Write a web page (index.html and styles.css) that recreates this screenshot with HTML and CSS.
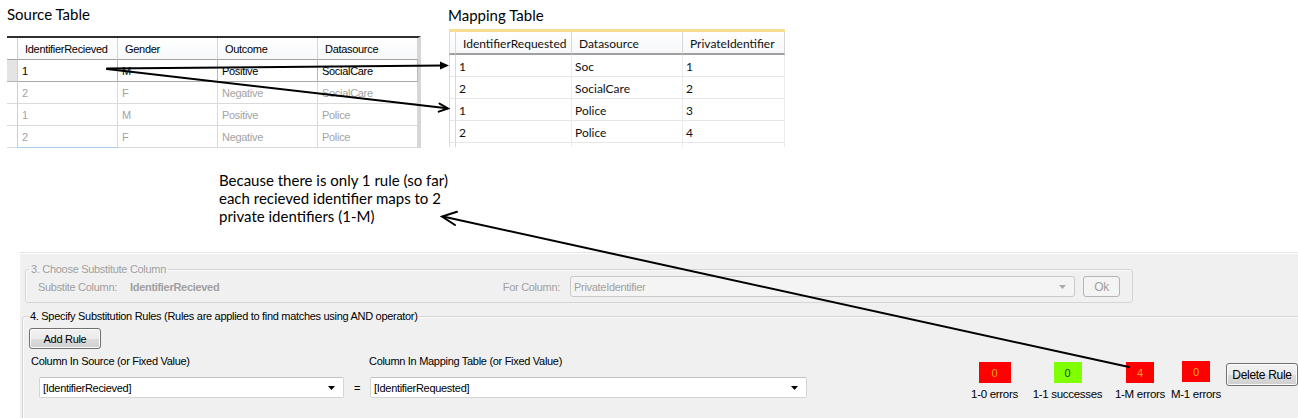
FILE: index.html
```html
<!DOCTYPE html>
<html>
<head>
<meta charset="utf-8">
<link rel="stylesheet" href="styles.css">
</head>
<body>
<div class="page">
  <div class="top">
    <section class="src">
      <h2 class="title">Source Table</h2>
      <div class="sgrid">
        <div class="c h rh"></div>
        <div class="c h">IdentifierRecieved</div>
        <div class="c h">Gender</div>
        <div class="c h">Outcome</div>
        <div class="c h">Datasource</div>

        <div class="c rh sel"></div>
        <div class="c r1">1</div>
        <div class="c r1">M</div>
        <div class="c r1">Positive</div>
        <div class="c r1">SocialCare</div>

        <div class="c rh"></div>
        <div class="c dim">2</div>
        <div class="c dim">F</div>
        <div class="c dim">Negative</div>
        <div class="c dim">SocialCare</div>

        <div class="c rh"></div>
        <div class="c dim">1</div>
        <div class="c dim">M</div>
        <div class="c dim">Positive</div>
        <div class="c dim">Police</div>

        <div class="c rh"></div>
        <div class="c dim last">2</div>
        <div class="c dim">F</div>
        <div class="c dim">Negative</div>
        <div class="c dim">Police</div>
      </div>
    </section>
    <section class="map">
      <h2 class="title">Mapping Table</h2>
      <div class="mgrid">
        <div class="m mh rh"></div>
        <div class="m mh">IdentifierRequested</div>
        <div class="m mh">Datasource</div>
        <div class="m mh">PrivateIdentifier</div>

        <div class="m rh"></div><div class="m">1</div><div class="m">Soc</div><div class="m">1</div>
        <div class="m rh"></div><div class="m">2</div><div class="m">SocialCare</div><div class="m">2</div>
        <div class="m rh"></div><div class="m">1</div><div class="m">Police</div><div class="m">3</div>
        <div class="m rh"></div><div class="m">2</div><div class="m">Police</div><div class="m">4</div>
        <div class="m rh stub"></div><div class="m stub"></div><div class="m stub"></div><div class="m stub"></div>
      </div>
    </section>
  </div>

  <p class="note">Because there is only 1 rule (so far)<br>each recieved identifier maps to 2<br>private identifiers (1-M)</p>

  <div class="panel">
    <fieldset class="grp grp3">
      <legend>3. Choose Substitute Column</legend>
      <div class="g3row">
        <span class="gray">Substite Column:</span>
        <span class="gray bold">IdentifierRecieved</span>
        <span class="gray forcol">For Column:</span>
        <div class="combo disabled wide3">
          <span>PrivateIdentifier</span>
          <svg class="dd" width="7" height="4" viewBox="0 0 7 4"><path d="M0 0H7L3.5 4Z" fill="#a9a9a9"/></svg>
        </div>
        <button class="btn btn-dis" type="button">Ok</button>
      </div>
    </fieldset>

    <fieldset class="grp grp4">
      <legend>4. Specify Substitution Rules (Rules are applied to find matches using AND operator)</legend>
      <div class="g4body">
        <div class="g4left">
          <button class="btn addrule" type="button">Add Rule</button>
          <div class="rules">
            <div class="field f1">
              <div class="flabel">Column In Source (or Fixed Value)</div>
              <div class="frow">
                <div class="combo c1">
                  <span>[IdentifierRecieved]</span>
                  <svg class="dd" width="7" height="4" viewBox="0 0 7 4"><path d="M0 0H7L3.5 4Z" fill="#000"/></svg>
                </div>
                <span class="eq">=</span>
              </div>
            </div>
            <div class="field f2">
              <div class="flabel">Column In Mapping Table (or Fixed Value)</div>
              <div class="frow">
                <div class="combo c2">
                  <span>[IdentifierRequested]</span>
                  <svg class="dd" width="7" height="4" viewBox="0 0 7 4"><path d="M0 0H7L3.5 4Z" fill="#000"/></svg>
                </div>
              </div>
            </div>
          </div>
        </div>
        <div class="stats">
          <div class="stat s1"><div class="badge red b32">0</div><div class="slabel">1-0 errors</div></div>
          <div class="stat s2"><div class="badge green">0</div><div class="slabel">1-1 successes</div></div>
          <div class="stat s3"><div class="badge red">4</div><div class="slabel">1-M errors</div></div>
          <div class="stat s4"><div class="badge red up">0</div><div class="slabel">M-1 errors</div></div>
          <button class="btn delrule" type="button">Delete Rule</button>
        </div>
      </div>
    </fieldset>
  </div>

  <svg class="arrows" width="1298" height="418" viewBox="0 0 1298 418">
    <g stroke="#000" stroke-width="2" fill="none" stroke-linecap="round">
      <line x1="107" y1="68.5" x2="443" y2="65.6"/>
      <line x1="107" y1="69" x2="447" y2="108.3"/>
      <polyline points="439.5,103.6 448,108.5 438.7,111.6"/>
      <line x1="1129" y1="367" x2="444" y2="216.8"/>
      <polyline points="457,211.8 442,216.5 455,225"/>
    </g>
    <polygon points="449,65.5 440,61.5 440,69.6" fill="#000"/>
  </svg>
</div>
</body>
</html>
```
FILE: styles.css
```css
html, body {
  margin: 0;
  padding: 0;
  background: #fff;
}
body {
  width: 1298px;
  height: 418px;
  overflow: hidden;
}
.page {
  position: relative;
  width: 1298px;
  height: 418px;
  font-family: "Liberation Sans", Arial, sans-serif;
  font-size: 11px;
  letter-spacing: -0.3px;
  color: #000;
}

/* top area */
.top {
  display: flex;
  height: 150px;
}
.title {
  margin: 0;
  font-family: Lato, "Open Sans", sans-serif;
  font-weight: normal;
  font-size: 15px;
  line-height: 20px;
  letter-spacing: 0;
  color: #000;
  box-sizing: border-box;
}
.src {
  margin-left: 7px;
}
.src .title {
  height: 36px;
  padding-top: 4px;
}
.map {
  margin-left: 28px;
}
.map .title {
  height: 29px;
  padding-top: 5px;
  margin-left: -1px;
}

/* source grid */
.sgrid {
  display: grid;
  grid-template-columns: 11px 100px 100px 100px 100px;
  grid-auto-rows: 22px;
  border-top: 2px solid #2e2e2e;
  border-right: 3px solid #d6d6d6;
  width: max-content;
}
.c {
  box-sizing: border-box;
  display: flex;
  align-items: center;
  padding-left: 4px;
  border-right: 1px solid #dadada;
  border-bottom: 1px solid #dadada;
  white-space: nowrap;
  overflow: hidden;
  background: #fff;
}
.c.h {
  padding-left: 7px;
  background: linear-gradient(#ffffff, #f7f8fa);
  border-right-color: #d5d5d5;
  border-bottom: 1px solid #a2a2a2;
}
.c.rh {
  padding: 0;
  background: #fff;
  border-right-color: #cfcfcf;
}
.c.rh.sel {
  background: #e4e4e4;
  border-bottom-color: #b5b5b5;
}
.c.r1 {
  border-bottom-color: #a9a9a9;
  border-right-color: #b9b9b9;
}
.c.dim {
  color: #a3a3a3;
}
.c.last {
  border-bottom: 1px solid #a8cdf0;
}

/* mapping grid */
.mgrid {
  display: grid;
  grid-template-columns: 7px 116px 111px 102px;
  grid-template-rows: 23px 22px 22px 22px 22px 4px;
  border-top: 3px solid #f8dc92;
  width: max-content;
  font-family: Lato, "Open Sans", sans-serif;
  font-size: 12px;
  letter-spacing: 0;
}
.m {
  box-sizing: border-box;
  display: flex;
  align-items: center;
  padding-left: 3px;
  padding-top: 2px;
  border-right: 1px solid #ececec;
  border-bottom: 1px solid #e6e6e6;
  white-space: nowrap;
  overflow: hidden;
  color: #111;
}
.m.mh {
  padding-left: 7px;
  background: linear-gradient(#ffffff, #f6f7f9);
  border-right-color: #d7d7d7;
  border-bottom: 2px solid #9f9f9f;
}
.m.rh {
  padding: 0;
  border-left: 1px solid #d9d9d9;
  border-right-color: #d9d9d9;
}
.m.stub {
  border-bottom: none;
}

/* annotation */
.note {
  margin: 21px 0 0 219px;
  font-family: Lato, "Open Sans", sans-serif;
  font-size: 15px;
  line-height: 18px;
  letter-spacing: 0;
  color: #000;
}

/* bottom panel */
.panel {
  margin: 27px 0 0 20px;
  height: 166px;
  background: #f0f0f0;
  border-top: 1px solid #e2e2e2;
  box-shadow: inset 0 1px 0 #ffffff;
  overflow: hidden;
  box-sizing: border-box;
}
.grp {
  box-sizing: border-box;
  border: 1px solid #d3d6d8;
  border-radius: 3px;
  box-shadow: inset 1px 1px 0 #fbfbfb;
  min-width: 0;
}
.grp legend {
  font-size: 11px;
  line-height: 13px;
  padding: 0 2px;
}
.grp3 {
  margin: 10px 0 0 5px;
  width: 1108px;
  padding: 0 12px 5px 12px;
}
.grp3 legend {
  color: #a0a0a0;
  margin-left: -9px;
}
.g3row {
  display: flex;
  align-items: center;
  height: 21px;
}
.gray {
  color: #a0a0a0;
}
.bold {
  font-weight: bold;
  margin-left: 13px;
}
.forcol {
  margin-left: auto;
  margin-right: 10px;
}
.grp4 {
  margin: 7px 0 0 2px;
  width: 1300px;
  height: 200px;
  padding: 0 0 0 5px;
}
.grp4 legend {
  margin-left: 1px;
  padding: 0 1px;
}
.g4body {
  display: flex;
}
.g4left {
  display: flex;
  flex-direction: column;
  align-items: flex-start;
}

/* buttons */
.btn {
  box-sizing: border-box;
  font-family: "Liberation Sans", Arial, sans-serif;
  font-size: 11px;
  letter-spacing: -0.3px;
  color: #000;
  border: 1px solid #707070;
  border-radius: 3px;
  background: linear-gradient(#f2f2f2 0%, #ebebeb 50%, #dddddd 51%, #cfcfcf 100%);
  box-shadow: inset 0 0 0 1px #fbfbfb;
  padding: 0;
  margin: 0;
}
.addrule {
  width: 72px;
  height: 21px;
  margin: 5px 0 0 1px;
}
.btn-dis {
  width: 37px;
  height: 21px;
  margin-left: 8px;
  color: #a0a0a0;
  border-color: #b5b5b5;
  background: #f4f4f4;
  box-shadow: none;
  font-size: 12px;
}
.delrule {
  width: 72px;
  height: 23px;
  margin-left: 10px;
  margin-top: 1px;
  font-size: 12px;
}

/* combos */
.combo {
  box-sizing: border-box;
  height: 21px;
  display: flex;
  align-items: center;
  justify-content: space-between;
  padding: 0 8px 0 3px;
  background: #fff;
  border: 1px solid #d4d4d4;
  border-top-color: #c2c2c2;
  border-radius: 2px;
  white-space: nowrap;
}
.combo.disabled {
  background: #f4f4f4;
  border-color: #c9c9c9;
  color: #a0a0a0;
  border-radius: 3px;
}
.wide3 {
  width: 505px;
}
.dd {
  flex: none;
  display: block;
}

/* rules */
.rules {
  display: flex;
  margin-top: 6px;
}
.field {
  display: flex;
  flex-direction: column;
}
.f1 {
  width: 338px;
  margin-left: 3px;
}
.flabel {
  line-height: 13px;
}
.frow {
  display: flex;
  align-items: center;
  margin-top: 9px;
}
.c1 {
  width: 305px;
  margin-left: 8px;
}
.eq {
  flex: 1;
  text-align: center;
  padding-left: 1px;
}
.c2 {
  width: 437px;
  margin-left: 1px;
}

/* stats */
.stats {
  display: flex;
  align-items: flex-start;
  margin: 39px 0 0 151px;
}
.stat {
  display: flex;
  flex-direction: column;
  align-items: center;
  white-space: nowrap;
}
.s1, .s2 { width: 73px; }
.s3 { width: 72px; }
.s4 { width: 40px; }
.badge {
  width: 28px;
  height: 21px;
  display: flex;
  align-items: center;
  justify-content: center;
  font-size: 11px;
}
.b32 { width: 32px; }
.badge.red {
  background: #ff0000;
  color: #ffa31a;
}
.badge.green {
  background: #80ff00;
  color: #1b3a00;
}
.badge.up {
  margin-top: -1px;
  margin-bottom: 1px;
}
.slabel {
  margin-top: 5px;
  line-height: 13px;
  font-size: 11.5px;
}

/* overlay arrows */
.arrows {
  position: absolute;
  left: 0;
  top: 0;
  pointer-events: none;
}
```
